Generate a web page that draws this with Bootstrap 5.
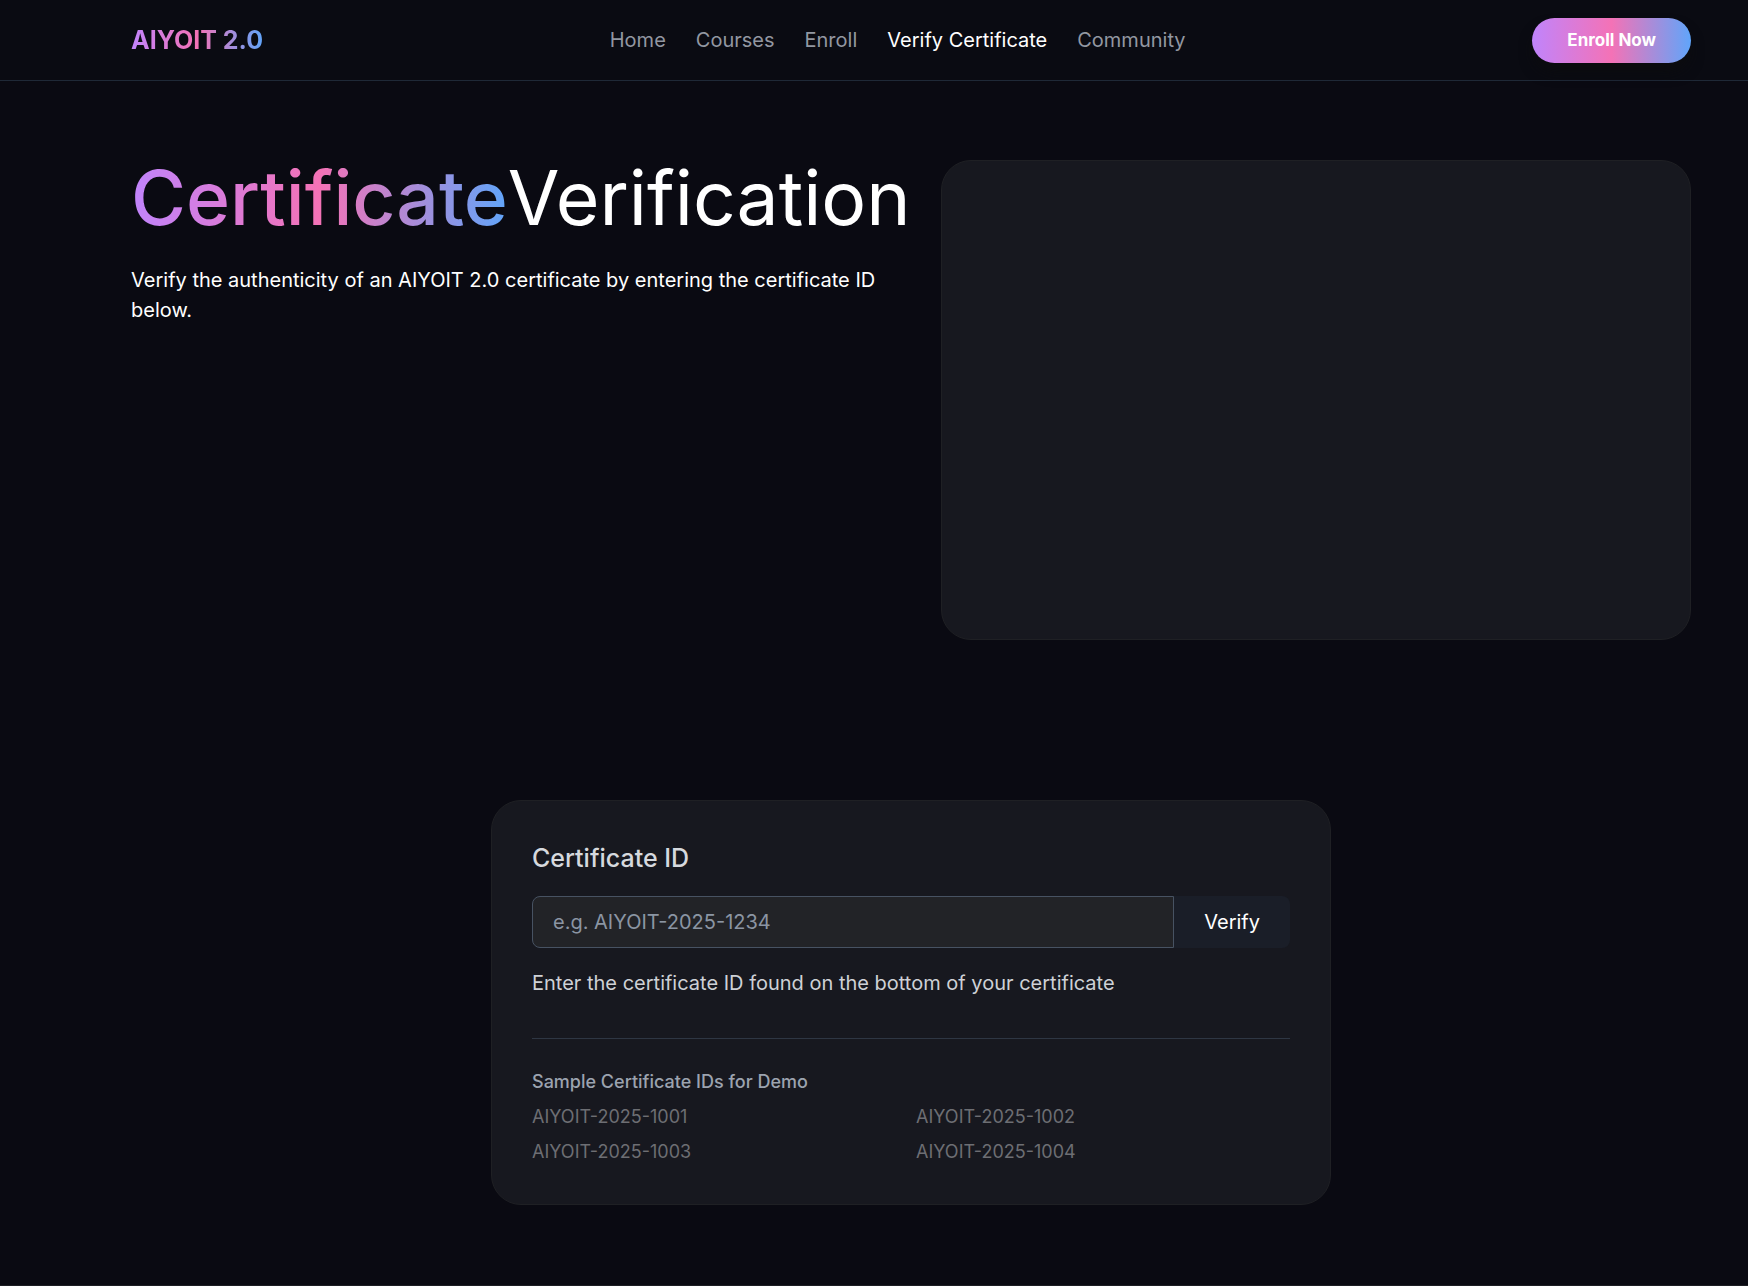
<!DOCTYPE html>
<html lang="en">
<head>
<meta charset="utf-8">
<meta name="viewport" content="width=device-width, initial-scale=1">
<title>Certificate Verification - AIYOIT 2.0</title>
<link href="https://cdn.jsdelivr.net/npm/bootstrap@5.3.0/dist/css/bootstrap.min.css" rel="stylesheet">
<style>
:root { --brand-gradient: linear-gradient(to right, #c084fc, #f472b6, #60a5fa); }
body { background: #0a0a12; color: #fff; font-family: Inter, "Liberation Sans", sans-serif; font-size: 20px; line-height: 30px; }
.shell { padding-left: 57px; padding-right: 57px; }
.site-header { background: #0a0b12; border-bottom: 1px solid #1f2937; min-height: 81px; }
.gradient-text { background: var(--brand-gradient); -webkit-background-clip: text; background-clip: text; color: transparent; }
.brand { font-size: 25px; line-height: 35px; font-weight: 700; text-decoration: none; }
.site-links { gap: 30px; }
.site-links .nav-link { color: #9297a1; padding: 0; }
.site-links .nav-link.active { color: #fff; }
.btn-enroll, .btn-enroll:hover { background: var(--brand-gradient); color: #fff; border: 0; border-radius: 24px; font-size: 17px; line-height: 25px; font-weight: 700; padding: 10px 35px; box-shadow: 0 10px 15px -3px #0c0c0e; }
.hero { padding-top: 79px; padding-bottom: 80px; }
.hero-title { font-size: 75px; line-height: 75px; font-weight: 400; margin-bottom: 30px; }
.panel { background: #17181f; border: 1px solid #1f2024; border-radius: 30px; }
.hero-panel { height: 480px; }
.verify { padding-top: 80px; padding-bottom: 80px; }
.verify-panel { max-width: 840px; padding: 40px; }
.field-title { font-size: 25px; line-height: 35px; font-weight: 500; color: #d6d9de; margin-bottom: 20px; display: block; }
.id-input, .id-input:focus { background: #222327; border-color: #475262; border-radius: 8px; color: #fff; font-size: 20px; line-height: 30px; padding: 10px 20px; box-shadow: none; }
.id-input::placeholder { color: #8b95a3; }
.btn-verify, .btn-verify:hover { background: #1a1e28; color: #fff; border: 0; border-radius: 8px; font-size: 20px; line-height: 30px; padding: 11px 30px; }
.help { color: #ced1d6; margin: 20px 0 40px; }
.samples { border-top: 1px solid #2e3643; padding-top: 30px; font-size: 18px; line-height: 25px; }
.samples h2 { font-size: 18px; line-height: 25px; font-weight: 500; color: #9ca3af; margin-bottom: 10px; }
.sample-list { gap: 10px; grid-template-columns: 1fr 1fr; color: #6d6e73; }
footer { border-top: 1px solid #1d1e24; }
.split { gap: 30px; }
@media (min-width: 1200px) {
  .shell { padding-left: 131px; }
  .split { grid-template-columns: 1fr 1fr; }
}
</style>
<script src="https://cdn.jsdelivr.net/npm/bootstrap@5.3.0/dist/js/bootstrap.bundle.min.js"></script>
</head>
<body>
<header class="site-header shell d-flex flex-wrap align-items-center justify-content-between">
  <a href="#" class="brand gradient-text">AIYOIT 2.0</a>
  <nav class="nav site-links" aria-label="Main">
    <a class="nav-link" href="#">Home</a>
    <a class="nav-link" href="#">Courses</a>
    <a class="nav-link" href="#">Enroll</a>
    <a class="nav-link active" aria-current="page" href="#">Verify Certificate</a>
    <a class="nav-link" href="#">Community</a>
  </nav>
  <button type="button" class="btn btn-enroll">Enroll Now</button>
</header>
<main>
  <section class="hero shell d-grid split">
    <div>
      <h1 class="hero-title d-flex"><span class="gradient-text fw-medium">Certificate</span><span>Verification</span></h1>
      <p class="mb-0">Verify the authenticity of an AIYOIT 2.0 certificate by entering the certificate ID below.</p>
    </div>
    <div class="panel hero-panel"></div>
  </section>
  <section class="verify shell">
    <div class="panel verify-panel mx-auto">
      <form>
        <label class="field-title" for="certificate-id">Certificate ID</label>
        <div class="input-group">
          <input type="text" id="certificate-id" class="form-control id-input" placeholder="e.g. AIYOIT-2025-1234" aria-describedby="certificate-help">
          <button type="button" class="btn btn-verify ms-0">Verify</button>
        </div>
        <p class="help" id="certificate-help">Enter the certificate ID found on the bottom of your certificate</p>
      </form>
      <div class="samples">
        <h2>Sample Certificate IDs for Demo</h2>
        <div class="sample-list d-grid">
          <div>AIYOIT-2025-1001</div>
          <div>AIYOIT-2025-1002</div>
          <div>AIYOIT-2025-1003</div>
          <div>AIYOIT-2025-1004</div>
        </div>
      </div>
    </div>
  </section>
</main>
<footer></footer>
</body>
</html>
